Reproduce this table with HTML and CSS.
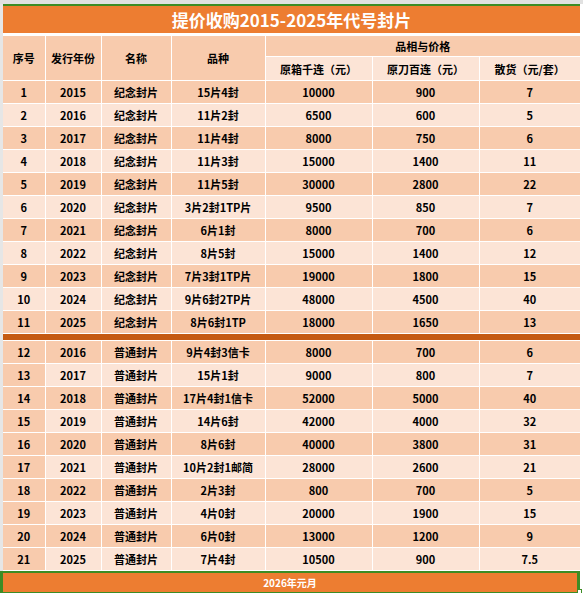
FILE: index.html
```html
<!DOCTYPE html>
<html lang="zh">
<head>
<meta charset="utf-8">
<title>提价收购2015-2025年代号封片</title>
<link rel="stylesheet" href="styles.css">
</head>
<body>
<div class="sheet">
  <div class="topbar"></div>
  <div class="main">
    <div class="gutter"></div>
    <div class="content">
      <div class="greenline"></div>
      <div class="title">提价收购2015-2025年代号封片</div>
      <div class="gap"></div>
      <table class="grid">
        <colgroup>
          <col class="c1"><col class="c2"><col class="c3"><col class="c4"><col class="c5"><col class="c6"><col class="c7">
        </colgroup>
        <thead>
          <tr class="h1">
            <th rowspan="2">序号</th>
            <th rowspan="2">发行年份</th>
            <th rowspan="2">名称</th>
            <th rowspan="2">品种</th>
            <th colspan="3">品相与价格</th>
          </tr>
          <tr class="h2">
            <th class="sub">原箱千连（元）</th>
            <th class="sub">原刀百连（元）</th>
            <th class="sub">散货（元/套）</th>
          </tr>
        </thead>
        <tbody>
          <tr class="dark"><td>1</td><td>2015</td><td>纪念封片</td><td>15片4封</td><td>10000</td><td>900</td><td>7</td></tr>
          <tr class="light"><td>2</td><td>2016</td><td>纪念封片</td><td>11片2封</td><td>6500</td><td>600</td><td>5</td></tr>
          <tr class="dark"><td>3</td><td>2017</td><td>纪念封片</td><td>11片4封</td><td>8000</td><td>750</td><td>6</td></tr>
          <tr class="light"><td>4</td><td>2018</td><td>纪念封片</td><td>11片3封</td><td>15000</td><td>1400</td><td>11</td></tr>
          <tr class="dark"><td>5</td><td>2019</td><td>纪念封片</td><td>11片5封</td><td>30000</td><td>2800</td><td>22</td></tr>
          <tr class="light"><td>6</td><td>2020</td><td>纪念封片</td><td>3片2封1TP片</td><td>9500</td><td>850</td><td>7</td></tr>
          <tr class="dark"><td>7</td><td>2021</td><td>纪念封片</td><td>6片1封</td><td>8000</td><td>700</td><td>6</td></tr>
          <tr class="light"><td>8</td><td>2022</td><td>纪念封片</td><td>8片5封</td><td>15000</td><td>1400</td><td>12</td></tr>
          <tr class="dark"><td>9</td><td>2023</td><td>纪念封片</td><td>7片3封1TP片</td><td>19000</td><td>1800</td><td>15</td></tr>
          <tr class="light"><td>10</td><td>2024</td><td>纪念封片</td><td>9片6封2TP片</td><td>48000</td><td>4500</td><td>40</td></tr>
          <tr class="dark"><td>11</td><td>2025</td><td>纪念封片</td><td>8片6封1TP</td><td>18000</td><td>1650</td><td>13</td></tr>
          <tr class="sep"><td colspan="7"></td></tr>
          <tr class="dark"><td>12</td><td>2016</td><td>普通封片</td><td>9片4封3信卡</td><td>8000</td><td>700</td><td>6</td></tr>
          <tr class="light"><td class="first">13</td><td>2017</td><td>普通封片</td><td>15片1封</td><td>9000</td><td>800</td><td>7</td></tr>
          <tr class="dark"><td>14</td><td>2018</td><td>普通封片</td><td>17片4封1信卡</td><td>52000</td><td>5000</td><td>40</td></tr>
          <tr class="light"><td class="first">15</td><td>2019</td><td>普通封片</td><td>14片6封</td><td>42000</td><td>4000</td><td>32</td></tr>
          <tr class="dark"><td>16</td><td>2020</td><td>普通封片</td><td>8片6封</td><td>40000</td><td>3800</td><td>31</td></tr>
          <tr class="light"><td class="first">17</td><td>2021</td><td>普通封片</td><td>10片2封1邮简</td><td>28000</td><td>2600</td><td>21</td></tr>
          <tr class="dark"><td>18</td><td>2022</td><td>普通封片</td><td>2片3封</td><td>800</td><td>700</td><td>5</td></tr>
          <tr class="light"><td class="first">19</td><td>2023</td><td>普通封片</td><td>4片0封</td><td>20000</td><td>1900</td><td>15</td></tr>
          <tr class="dark"><td>20</td><td>2024</td><td>普通封片</td><td>6片0封</td><td>13000</td><td>1200</td><td>9</td></tr>
          <tr class="light"><td class="first">21</td><td>2025</td><td>普通封片</td><td>7片4封</td><td>10500</td><td>900</td><td>7.5</td></tr>
        </tbody>
      </table>
    </div>
  </div>
  <div class="footer">2026年元月</div>
  <div class="handle"></div>
</div>
</body>
</html>
```

FILE: styles.css
```css
html, body {
  margin: 0;
  padding: 0;
  background: #ffffff;
}

.sheet {
  position: relative;
  width: 583px;
  height: 593px;
  overflow: hidden;
  background: #ffffff;
  font-family: "Noto Sans CJK SC", "Noto Sans", sans-serif;
  font-weight: bold;
  color: #000000;
}

.topbar {
  height: 4px;
  background: #e1e1e1;
}

.main {
  display: flex;
  width: 580px;
}

.gutter {
  width: 3px;
  background: #e6e6e6;
  flex: none;
}

.content {
  width: 577px;
  flex: none;
}

.greenline {
  height: 2px;
  background: #3d8c25;
}

.title {
  height: 27px;
  line-height: 27px;
  background: #ed7d31;
  color: #ffffff;
  font-size: 17px;
  text-align: center;
}

.gap {
  height: 3px;
}

.grid {
  width: 577px;
  border-collapse: collapse;
  table-layout: fixed;
  font-size: 11px;
}

.c1 { width: 42px; }
.c2 { width: 56px; }
.c3 { width: 70px; }
.c4 { width: 94px; }
.c5 { width: 107px; }
.c6 { width: 107px; }
.c7 { width: 101px; }

.grid th,
.grid td {
  border: 1px solid #ffffff;
  padding: 0;
  text-align: center;
  vertical-align: middle;
  white-space: nowrap;
  line-height: 14px;
}

.grid tr:first-child th {
  border-top: none;
}

.grid th:first-child,
.grid td:first-child {
  border-left: none;
}

.grid th:last-child,
.grid td:last-child {
  border-right: none;
}

.grid th {
  background: #f8cbad;
  font-weight: bold;
}

.h1 th {
  height: 20px;
}

.h2 th {
  height: 23px;
}

.grid th.sub {
  background: #fce4d6;
}

.grid tbody td {
  height: 22px;
}

.dark td {
  background: #f8cbad;
}

.light td {
  background: #fce4d6;
}

.light td.first {
  background: #f8cbad;
}

.grid tr.sep td {
  height: 6px;
  background: #c55a11;
  border-top: none;
  border-bottom: none;
}

.footer {
  box-sizing: border-box;
  width: 580px;
  height: 25px;
  margin-top: -1px;
  border: 3px solid #3d8c25;
  background: #ed7d31;
  color: #ffffff;
  font-size: 10px;
  line-height: 19px;
  text-align: center;
}

.handle {
  position: absolute;
  left: 577px;
  top: 589px;
  width: 5px;
  height: 5px;
  box-sizing: border-box;
  border: 1px solid #3d8c25;
  background: #ffffff;
}
```
